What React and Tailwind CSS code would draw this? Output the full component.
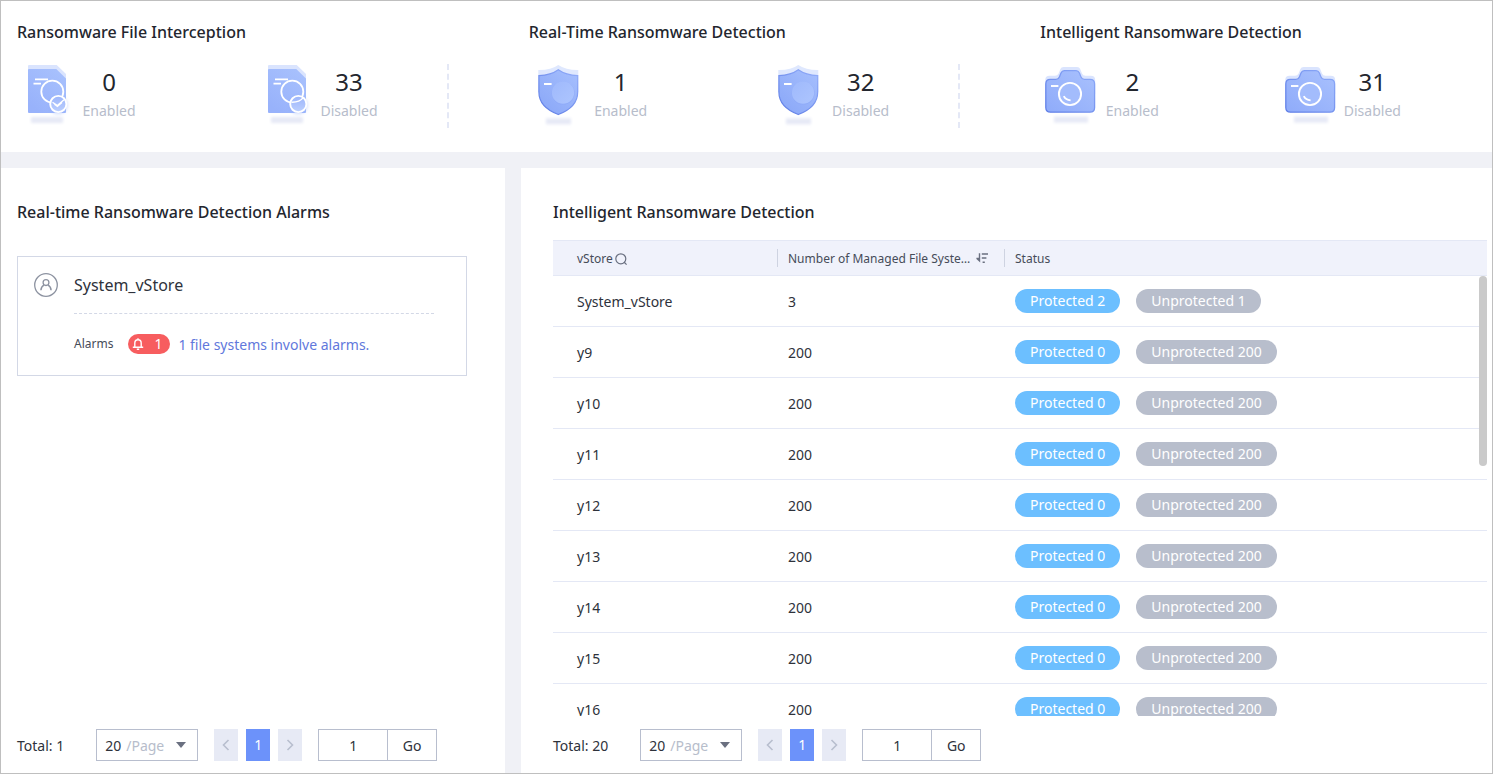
import { useEffect, useRef, useState } from "react";

function FileIcon({ id, checked }) {
  return (
    <svg viewBox="0 0 60 64" className="h-16 w-15 shrink-0" aria-hidden="true">
      <defs>
        <linearGradient id={`${id}-front`} x1="1" y1="0" x2="0.3" y2="1">
          <stop offset="0" stopColor="#a9c2fd" />
          <stop offset="1" stopColor="#98b2fb" />
        </linearGradient>
        <linearGradient id={`${id}-badge`} x1="0" y1="0" x2="0" y2="1">
          <stop offset="0" stopColor="#9cb5fb" />
          <stop offset="1" stopColor="#bccffe" />
        </linearGradient>
        <filter id={`${id}-blur`} x="-20%" y="-100%" width="140%" height="300%">
          <feGaussianBlur stdDeviation="1.7" />
        </filter>
      </defs>
      <rect x="14" y="53" width="32" height="6" fill="#e6e9f6" filter={`url(#${id}-blur)`} />
      <path d="M11 2Q11 1 12 1H39.7L49 10V30H11Z" fill="#dae4fe" />
      <path d="M11 6Q11 5 12 5H39.3L49 14.5V48Q49 49 48 49H12Q11 49 11 48Z" fill={`url(#${id}-front)`} />
      <circle cx="41.3" cy="41" r="9.5" fill="#8aa6f8" opacity="0.35" filter={`url(#${id}-blur)`} />
      <path d="M18 15.3H31M16.5 19.6H24" stroke="#fff" strokeWidth="1.8" fill="none" />
      <circle cx="35.3" cy="27.7" r="11" fill="none" stroke="#fff" strokeWidth="1.8" />
      <circle cx="41.3" cy="40" r="8.1" fill={`url(#${id}-badge)`} stroke="#fff" strokeWidth="1.9" />
      {checked ? (
        <path d="M35.5 38.2L40.4 41.6L47 35.8M37.4 40.2L40.4 42.4L45 38.4" fill="none" stroke="#fff" strokeWidth="1.3" />
      ) : (
        <path d="M34.6 38.2Q42.5 38.4 46 33.9" fill="none" stroke="#fff" strokeWidth="1.4" />
      )}
    </svg>
  );
}

function ShieldIcon({ id }) {
  return (
    <svg viewBox="0 0 60 64" className="h-16 w-15 shrink-0" aria-hidden="true">
      <defs>
        <linearGradient id={`${id}-front`} x1="1" y1="0" x2="0.2" y2="1">
          <stop offset="0" stopColor="#a6bffd" />
          <stop offset="1" stopColor="#8ba8f8" />
        </linearGradient>
        <linearGradient id={`${id}-edge`} x1="1" y1="0" x2="0.2" y2="1">
          <stop offset="0" stopColor="#93aefa" />
          <stop offset="1" stopColor="#5f7ee6" />
        </linearGradient>
        <linearGradient id={`${id}-disc`} x1="0" y1="0" x2="1" y2="1">
          <stop offset="0" stopColor="#9fb9fc" />
          <stop offset="1" stopColor="#adc5fe" />
        </linearGradient>
        <filter id={`${id}-blur`} x="-20%" y="-100%" width="140%" height="300%">
          <feGaussianBlur stdDeviation="1.7" />
        </filter>
      </defs>
      <rect x="17" y="54.3" width="25" height="6" fill="#e6e9f6" filter={`url(#${id}-blur)`} />
      <path d="M29.3 1Q37 6.2 49.3 6V28H9.3V6Q22 6.2 29.3 1Z" fill="#dfe8fe" />
      <path
        d="M29.3 5.8Q37 11.3 48.7 11.6V28C48.7 39 40 46.5 29.3 50.5C18.7 46.5 9.9 39 9.9 28V11.6Q22 11.3 29.3 5.8Z"
        fill={`url(#${id}-front)`}
        stroke={`url(#${id}-edge)`}
        strokeWidth="1.2"
      />
      <circle cx="34.2" cy="29.1" r="11.4" fill="#84a1f6" opacity="0.35" />
      <circle cx="34" cy="28.7" r="11.1" fill={`url(#${id}-disc)`} />
      <path d="M15 20H22.6" stroke="#fff" strokeWidth="2" />
    </svg>
  );
}

function CameraIcon({ id }) {
  return (
    <svg viewBox="0 0 60 64" className="h-16 w-15 shrink-0" aria-hidden="true">
      <defs>
        <linearGradient id={`${id}-front`} x1="1" y1="0" x2="0.1" y2="1">
          <stop offset="0" stopColor="#a9c1fd" />
          <stop offset="1" stopColor="#90acfa" />
        </linearGradient>
        <linearGradient id={`${id}-edge`} x1="1" y1="0" x2="0" y2="1">
          <stop offset="0" stopColor="#8eabf9" />
          <stop offset="1" stopColor="#5f7ee6" />
        </linearGradient>
        <filter id={`${id}-blur`} x="-20%" y="-100%" width="140%" height="300%">
          <feGaussianBlur stdDeviation="1.7" />
        </filter>
      </defs>
      <rect x="14" y="52.6" width="34" height="6" fill="#e6e9f6" filter={`url(#${id}-blur)`} />
      <path
        d="M9.5 11.8H15Q17.5 11.8 18.6 9.4L20.3 5.2Q21.2 3 23.6 3H37Q39.4 3 40.3 5.2L42 9.4Q43 11.8 45.6 11.8H50.8Q55.2 11.8 55.2 16.2V30H5.3V16Q5.3 11.8 9.5 11.8Z"
        fill="#dae4fe"
      />
      <path
        d="M10.3 15.4H16Q18.4 15.4 19.4 13L21 9Q22 6.6 24.4 6.6H36Q38.4 6.6 39.4 9L41 13Q42 15.4 44.4 15.4H50Q54.6 15.4 54.6 20V43.6Q54.6 48.2 50 48.2H10.4Q5.8 48.2 5.8 43.6V20Q5.8 15.4 10.3 15.4Z"
        fill={`url(#${id}-front)`}
        stroke={`url(#${id}-edge)`}
        strokeWidth="1.3"
      />
      <circle cx="30" cy="30" r="11.1" fill="#a3bcfc" stroke="#fff" strokeWidth="1.9" />
      <path d="M23.8 32.2Q25.6 36 30.6 36.4" fill="none" stroke="#fff" strokeWidth="1.9" />
      <path d="M11 22H18.4" stroke="#fff" strokeWidth="1.9" />
    </svg>
  );
}

function Stat({ icon, value, label }) {
  return (
    <div className="flex items-center">
      {icon}
      <div className="w-16 pb-0.5 text-center">
        <div className="text-2xl leading-8 text-[#23262e]">{value}</div>
        <div className="text-sm leading-[26px] text-[#b7bdcb]">{label}</div>
      </div>
    </div>
  );
}

function Summary({ title, enabled, disabled, divider }) {
  return (
    <section>
      <h2 className="text-base leading-6 font-medium text-[#23262e]">{title}</h2>
      <div
        className={
          divider
            ? "mt-5 grid h-16 grid-cols-[240px_1fr] border-r-2 border-dashed border-[#e4e8f6]"
            : "mt-5 grid h-16 grid-cols-[240px_1fr]"
        }
      >
        {enabled}
        {disabled}
      </div>
    </section>
  );
}

function Pager({ name, total }) {
  return (
    <nav className="flex items-center text-sm text-[#2e323b]" aria-label={`${name} pages`}>
      <span className="mr-8 pt-0.5">Total: {total}</span>
      <div className="relative mr-4 h-8 w-[102px]">
        <select
          aria-label={`${name} rows per page`}
          defaultValue="20"
          className="h-8 w-full appearance-none rounded-none border border-[#b8bece] bg-white pt-0.5 pl-2 text-sm text-[#2e323b]"
        >
          <option>20</option>
          <option>50</option>
          <option>100</option>
        </select>
        <span className="pointer-events-none absolute top-0 left-[30px] pt-px leading-8 text-[#b7bdcb]">/Page</span>
        <svg viewBox="0 0 10 6" className="pointer-events-none absolute top-[13px] right-3 h-1.5 w-2.5" aria-hidden="true">
          <path d="M0 0H10L5 6Z" fill="#6a7080" />
        </svg>
      </div>
      <div className="mr-4 flex gap-2">
        <button type="button" aria-label="Previous page" className="flex h-8 w-6 items-center justify-center bg-[#e7eaf5]">
          <svg viewBox="0 0 8 12" className="h-3 w-2" fill="none" stroke="#b8bece" strokeWidth="1.6" aria-hidden="true">
            <path d="M6.5 1L1.5 6L6.5 11" />
          </svg>
        </button>
        <button type="button" className="h-8 w-6 bg-[#6c92fa] text-white">
          1
        </button>
        <button type="button" aria-label="Next page" className="flex h-8 w-6 items-center justify-center bg-[#e7eaf5]">
          <svg viewBox="0 0 8 12" className="h-3 w-2" fill="none" stroke="#b8bece" strokeWidth="1.6" aria-hidden="true">
            <path d="M1.5 1L6.5 6L1.5 11" />
          </svg>
        </button>
      </div>
      <input
        aria-label={`${name} page number`}
        defaultValue="1"
        className="h-8 w-[70px] border border-[#b8bece] bg-white text-center text-sm"
      />
      <button type="button" className="h-8 w-[49px] border border-l-0 border-[#b8bece] bg-white pt-0.5">
        Go
      </button>
    </nav>
  );
}

function AlarmCard() {
  return (
    <article className="mt-8 border border-[#d3d8e6] pt-4 pr-8 pb-[21px] pl-4">
      <div className="flex items-center gap-4">
        <svg viewBox="0 0 24 24" className="h-6 w-6" fill="none" stroke="#8d93a1" aria-hidden="true">
          <circle cx="12" cy="12" r="11.3" strokeWidth="1.3" />
          <circle cx="12" cy="9.6" r="2.9" strokeWidth="1.3" />
          <path d="M6.9 17.2Q7.2 13.6 9.9 12.2M17.1 17.2Q16.8 13.6 14.1 12.2" strokeWidth="1.5" />
        </svg>
        <h3 className="text-base leading-6 text-[#2e323b]">System_vStore</h3>
      </div>
      <div className="mt-4 ml-10 flex items-center border-t border-dashed border-[#d3d8e6] pt-5">
        <span className="text-xs leading-5 text-[#464c59]">Alarms</span>
        <span className="ml-[15px] flex h-5 w-[42px] items-center justify-between rounded-full bg-[#f75d5f] pr-2 pl-1 text-sm text-white">
          <svg viewBox="0 0 12 12" className="h-3 w-3" fill="none" stroke="#fff" strokeWidth="1.4" aria-hidden="true">
            <path d="M6 0.3V1.6M2.8 9V5.2A3.2 3.4 0 0 1 9.2 5.2V9M0.8 9.2H11.2M4.8 11.2H7.2" />
          </svg>
          1
        </span>
        <a href="#alarms" className="ml-2 h-5 pt-px text-sm leading-5 text-[#6178dc]">
          1 file systems involve alarms.
        </a>
      </div>
    </article>
  );
}

const rows = [
  { name: "System_vStore", managed: 3, safe: 2, open: 1 },
  ...Array.from({ length: 19 }, (_, i) => ({ name: `y${i + 9}`, managed: 200, safe: 0, open: 200 })),
];

const HEAD = 36;

function StoreTable() {
  const box = useRef(null);
  const [thumb, setThumb] = useState({ top: 0, height: 0 });

  const measure = () => {
    const el = box.current;
    const track = el.clientHeight - HEAD;
    const full = el.scrollHeight - HEAD;
    setThumb({
      top: HEAD + (el.scrollTop / full) * track,
      height: full > track ? (track * track) / full : 0,
    });
  };

  useEffect(() => {
    measure();
    window.addEventListener("resize", measure);
    return () => window.removeEventListener("resize", measure);
  }, []);

  return (
    <div className="relative mt-4 flex min-h-0 flex-1 flex-col">
      <div ref={box} onScroll={measure} className="min-h-0 flex-1 overflow-y-auto [scrollbar-width:none]">
        <table className="w-full table-fixed border-separate border-spacing-0 text-left">
          <colgroup>
            <col className="w-[224px]" />
            <col className="w-[227px]" />
            <col />
          </colgroup>
          <thead className="sticky top-0 z-10 text-xs text-[#464c59]">
            <tr className="h-9 bg-[#f0f2fb]">
              <th className="border-y border-[#e4e8f5] p-0 pl-6 font-normal">
                <div className="flex items-center gap-0.5 pt-0.5">
                  vStore
                  <svg viewBox="0 0 12 12" className="h-3 w-3" fill="none" stroke="#6a7080" strokeWidth="1.2" aria-hidden="true">
                    <circle cx="5.8" cy="5.8" r="5" />
                    <path d="M9 9L11.6 11.6" />
                  </svg>
                </div>
              </th>
              <th className="border-y border-[#e4e8f5] p-0 font-normal">
                <div className="flex h-[18px] items-center gap-0.5 border-l border-[#ced3e1] pr-4 pl-2.5">
                  <span className="min-w-0 flex-1 truncate pt-0.5">Number of Managed File Systems</span>
                  <svg viewBox="0 0 12 12" className="h-3 w-3 shrink-0" fill="#6a7080" aria-hidden="true">
                    <path d="M2.8 1.2H4.2V10.6L0.4 7V5.8H2.8ZM5.8 1.2H12V2.7H5.8ZM5.8 5.2H10.4V6.7H5.8ZM6.6 9.4H8.8V11H6.6Z" />
                  </svg>
                </div>
              </th>
              <th className="border-y border-[#e4e8f5] p-0 font-normal">
                <div className="flex h-[18px] items-center border-l border-[#ced3e1] pt-0.5 pl-2.5">Status</div>
              </th>
            </tr>
          </thead>
          <tbody className="text-sm text-[#2e323b]">
            {rows.map((row) => (
              <tr key={row.name} className="h-[51px]">
                <td className="border-b border-[#e4e8f5] p-0 pt-0.5 pl-6">{row.name}</td>
                <td className="border-b border-[#e4e8f5] p-0 pt-0.5 pl-[11px]">{row.managed}</td>
                <td className="border-b border-[#e4e8f5] p-0 pl-[11px]">
                  <div className="flex gap-4 text-white">
                    <span className="h-6 rounded-full bg-[#6cbfff] px-[15px] leading-6">Protected {row.safe}</span>
                    <span className="h-6 rounded-full bg-[#b8becc] px-[15px] leading-6">Unprotected {row.open}</span>
                  </div>
                </td>
              </tr>
            ))}
          </tbody>
        </table>
      </div>
      <div
        className="pointer-events-none absolute top-0 right-0 z-20 w-2 rounded-full bg-[#cacaca]"
        style={{ height: thumb.height, transform: `translateY(${thumb.top}px)` }}
      />
    </div>
  );
}

export default function App() {
  return (
    <div className="flex h-screen min-w-[1280px] flex-col gap-4 border border-[#bfbfbf] bg-[#f0f1f6] font-['Noto_Sans','Open_Sans',sans-serif]">
      <header className="grid grid-cols-3 gap-20 bg-white pt-[19px] pr-5 pb-6 pl-4">
        <Summary
          title="Ransomware File Interception"
          divider
          enabled={<Stat icon={<FileIcon id="file-on" checked />} value="0" label="Enabled" />}
          disabled={<Stat icon={<FileIcon id="file-off" />} value="33" label="Disabled" />}
        />
        <Summary
          title="Real-Time Ransomware Detection"
          divider
          enabled={<Stat icon={<ShieldIcon id="shield-on" />} value="1" label="Enabled" />}
          disabled={<Stat icon={<ShieldIcon id="shield-off" />} value="32" label="Disabled" />}
        />
        <Summary
          title="Intelligent Ransomware Detection"
          enabled={<Stat icon={<CameraIcon id="camera-on" />} value="2" label="Enabled" />}
          disabled={<Stat icon={<CameraIcon id="camera-off" />} value="31" label="Disabled" />}
        />
      </header>
      <main className="grid min-h-0 flex-1 grid-cols-[504px_1fr] gap-4">
        <section className="flex min-h-0 flex-col bg-white pt-8 pb-3 pl-4">
          <h2 className="text-base leading-6 font-medium text-[#23262e]">Real-time Ransomware Detection Alarms</h2>
          <div className="flex-1 pr-[38px]">
            <AlarmCard />
          </div>
          <Pager name="Alarms" total={1} />
        </section>
        <section className="flex min-h-0 flex-col bg-white pt-8 pr-[5px] pb-3 pl-8">
          <h2 className="text-base leading-6 font-medium text-[#23262e]">Intelligent Ransomware Detection</h2>
          <StoreTable />
          <div className="pt-[13px]">
            <Pager name="Stores" total={20} />
          </div>
        </section>
      </main>
    </div>
  );
}
